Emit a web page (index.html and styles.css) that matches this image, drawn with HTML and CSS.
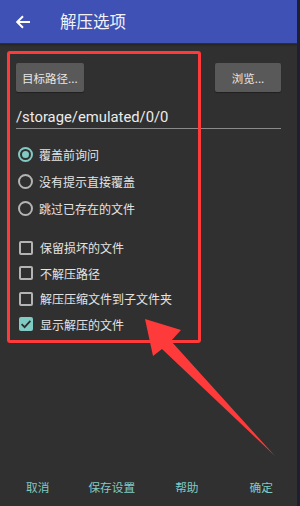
FILE: index.html
```html
<!DOCTYPE html>
<html lang="zh-CN">
  <head>
    <meta charset="UTF-8">
    <title>解压选项</title>
    <link rel="stylesheet" href="styles.css">
  </head>
  <body>
    <div class="app">
      <div class="toolbar">
        <svg class="back" width="16" height="16" viewBox="0 0 16 16">
          <path d="M15 8H2.5M8 2.2L2.2 8L8 13.8" fill="none" stroke="#fff" stroke-width="2"/>
        </svg>
        <span class="title">解压选项</span>
      </div>

      <div class="content">
        <div class="path-row">
          <div class="btn">目标路径...</div>
          <div class="btn btn-wide">浏览...</div>
        </div>
        <div class="path-field">/storage/emulated/0/0</div>

        <div class="radio-group">
          <div class="option"><span class="radio checked"></span>覆盖前询问</div>
          <div class="option"><span class="radio"></span>没有提示直接覆盖</div>
          <div class="option"><span class="radio"></span>跳过已存在的文件</div>
        </div>

        <div class="check-group">
          <div class="option"><span class="check"></span>保留损坏的文件</div>
          <div class="option"><span class="check"></span>不解压路径</div>
          <div class="option"><span class="check"></span>解压压缩文件到子文件夹</div>
          <div class="option">
            <span class="check checked">
              <svg width="14" height="14" viewBox="0 0 14 14"><path d="M2.6 7.2L5.6 10.1L11.4 3.9" fill="none" stroke="#2e2e2e" stroke-width="1.8"/></svg>
            </span>显示解压的文件
          </div>
        </div>
      </div>

      <div class="footer">
        <span class="action a-cancel">取消</span>
        <span class="action a-save">保存设置</span>
        <span class="action a-help">帮助</span>
        <span class="action a-ok">确定</span>
      </div>

      <!-- annotation drawn over the dialog -->
      <div class="mark-box"></div>
      <svg class="mark-arrow" width="300" height="506" viewBox="0 0 300 506">
        <polygon points="145,319 181,330 171,341 275,456 162,349 153,356" fill="#ff3a3a"/>
      </svg>
    </div>
  </body>
</html>
```

FILE: styles.css
```css
body{
  margin: 0;
  padding: 0;
  background: #303030;
}

.app{
  position: relative;
  width: 297px;
  height: 506px;
  border-right: 3px solid #1d2030;
  background: #303030;
  display: flex;
  flex-direction: column;
  font-family: Roboto, "Noto Sans CJK SC", sans-serif;
  color: #e6e6e6;
  overflow: hidden;
}

.toolbar{
  height: 43px;
  flex: none;
  background: #3f51b5;
  border-bottom: 1px solid #2a2d44;
  display: flex;
  align-items: center;
  box-shadow: 0 1px 2px rgba(0,0,0,0.3);
}

.toolbar .back{
  margin-left: 15px;
  margin-top: 1px;
}

.toolbar .title{
  margin-left: 29px;
  font-family: "Noto Sans CJK SC", sans-serif;
  font-size: 16.5px;
  color: #f2f2f6;
  margin-top: -1px;
}

.content{
  padding: 0 16px;
  flex: 1;
}

.path-row{
  margin-top: 19px;
  display: flex;
  justify-content: space-between;
}

.btn{
  height: 29px;
  padding: 0 6px;
  background: #595959;
  border-radius: 2px;
  font-family: "Noto Sans CJK SC", sans-serif;
  font-size: 11.5px;
  color: #e8e8e8;
  display: flex;
  align-items: center;
  justify-content: center;
  box-shadow: 0 1px 1px rgba(0,0,0,0.35);
}

.btn-wide{
  min-width: 54px;
}

.path-field{
  margin-top: 15px;
  font-size: 14.8px;
  line-height: 20px;
  padding-bottom: 1px;
  color: #ececec;
  border-bottom: 1px solid #8a8a8a;
}

.radio-group{
  margin-top: 12px;
}

.radio-group .option{
  height: 27px;
}

.check-group{
  margin-top: 13px;
}

.check-group .option{
  height: 25.5px;
}

.option{
  display: flex;
  align-items: center;
  font-family: "Noto Sans CJK SC", sans-serif;
  font-size: 12px;
  color: #e4e4e4;
}

.radio{
  box-sizing: border-box;
  width: 15px;
  height: 15px;
  margin-left: 2px;
  margin-right: 6px;
  border: 2px solid #b4b4b4;
  border-radius: 50%;
  display: flex;
  align-items: center;
  justify-content: center;
}

.radio.checked{
  border-color: #80cbc4;
}

.radio.checked::after{
  content: '';
  width: 7px;
  height: 7px;
  border-radius: 50%;
  background: #80cbc4;
}

.check{
  box-sizing: border-box;
  width: 14px;
  height: 14px;
  margin-left: 3px;
  margin-right: 7px;
  border: 2px solid #b4b4b4;
  border-radius: 2px;
  display: flex;
}

.check.checked{
  border: none;
  background: #80cbc4;
}

.footer{
  height: 40px;
  flex: none;
  display: flex;
  align-items: center;
  padding-left: 26px;
  font-family: "Noto Sans CJK SC", sans-serif;
  font-size: 11.7px;
  color: #80cbc4;
}

.footer .a-save{ margin-left: 39px; }
.footer .a-help{ margin-left: 40px; }
.footer .a-ok{ margin-left: 51px; }

.mark-box{
  position: absolute;
  left: 7px;
  top: 51px;
  width: 188px;
  height: 286px;
  border: 3px solid #ff3a3a;
  border-radius: 3px;
}

.mark-arrow{
  position: absolute;
  left: 0;
  top: 0;
}
```
